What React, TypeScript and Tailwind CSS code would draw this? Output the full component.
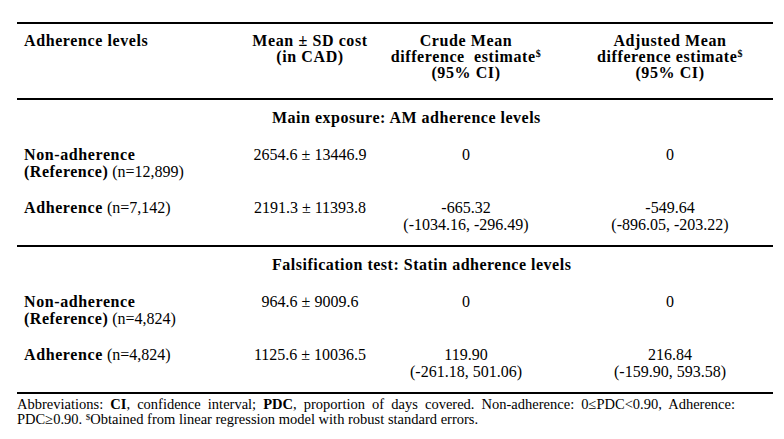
import React from "react";

type Row = {
  bold1: string;
  bold2?: string;
  n: string;
  mean: string;
  crude: string[];
  adjusted: string[];
};

const sections: { title: string; rows: Row[] }[] = [
  {
    title: "Main exposure: AM adherence levels",
    rows: [
      {
        bold1: "Non-adherence",
        bold2: "(Reference)",
        n: "(n=12,899)",
        mean: "2654.6 ± 13446.9",
        crude: ["0"],
        adjusted: ["0"],
      },
      {
        bold1: "Adherence",
        n: "(n=7,142)",
        mean: "2191.3 ± 11393.8",
        crude: ["-665.32", "(-1034.16, -296.49)"],
        adjusted: ["-549.64", "(-896.05, -203.22)"],
      },
    ],
  },
  {
    title: "Falsification test: Statin adherence levels",
    rows: [
      {
        bold1: "Non-adherence",
        bold2: "(Reference)",
        n: "(n=4,824)",
        mean: "964.6 ± 9009.6",
        crude: ["0"],
        adjusted: ["0"],
      },
      {
        bold1: "Adherence",
        n: "(n=4,824)",
        mean: "1125.6 ± 10036.5",
        crude: ["119.90", "(-261.18, 501.06)"],
        adjusted: ["216.84", "(-159.90, 593.58)"],
      },
    ],
  },
];

const cols = "grid grid-cols-[223px_140px_172px_221px]";

function DataRow({ row, first }: { row: Row; first: boolean }) {
  return (
    <div className={`${cols} ${first ? "pt-[20px]" : "pt-[19px]"}`}>
      <div className="pl-[7px]">
        {row.bold2 ? (
          <>
            <div className="font-bold tracking-[0.6px]">{row.bold1}</div>
            <div>
              <span className="font-bold tracking-[0.5px]">{row.bold2}</span> {row.n}
            </div>
          </>
        ) : (
          <div>
            <span className="font-bold tracking-[0.6px]">{row.bold1}</span> {row.n}
          </div>
        )}
      </div>
      <div className="text-center whitespace-nowrap">{row.mean}</div>
      <div className="text-center whitespace-nowrap">
        {row.crude.map((t) => (
          <div key={t}>{t}</div>
        ))}
      </div>
      <div className="pl-[15px] text-center whitespace-nowrap">
        {row.adjusted.map((t) => (
          <div key={t}>{t}</div>
        ))}
      </div>
    </div>
  );
}

export default function App() {
  return (
    <div className="w-[784px] h-[439px] bg-white text-black font-['Liberation_Serif','Times_New_Roman',serif] text-[16px] leading-[17px]">
      <div className="ml-[17px] w-[756px] pt-[22px]">
        <div className="border-t-2 border-black" />

        <div className={`${cols} pt-[9px] pb-[17px] font-bold leading-[16px] tracking-[0.6px]`}>
          <div className="pl-[7px]">Adherence levels</div>
          <div className="text-center">
            <div>Mean ± SD cost</div>
            <div>(in CAD)</div>
          </div>
          <div className="text-center">
            <div>Crude Mean</div>
            <div>
              difference&nbsp; estimate<sup className="text-[10px] leading-none">$</sup>
            </div>
            <div>(95% CI)</div>
          </div>
          <div className="pl-[15px] text-center">
            <div>Adjusted Mean</div>
            <div>
              difference estimate<sup className="text-[10px] leading-none">$</sup>
            </div>
            <div>(95% CI)</div>
          </div>
        </div>

        {sections.map((s) => (
          <div key={s.title}>
            <div className="border-t-2 border-black" />
            <div className="pt-[9px] pl-[255px] font-bold tracking-[0.5px]">{s.title}</div>
            {s.rows.map((r, i) => (
              <DataRow key={i} row={r} first={i === 0} />
            ))}
            <div className="h-[12px]" />
          </div>
        ))}

        <div className="border-t-2 border-black" />
        <div className="pt-[3px] text-[14.5px] leading-[15px]">
          <p className="w-[718px] text-justify [text-align-last:justify]">
            Abbreviations: <b>CI</b>, confidence interval; <b>PDC</b>, proportion of days covered. Non-adherence: 0≤PDC&lt;0.90, Adherence:
          </p>
          <p>
            PDC≥0.90. <sup className="text-[9px] leading-none">$</sup>Obtained from linear regression model with robust standard errors.
          </p>
        </div>
      </div>
    </div>
  );
}
